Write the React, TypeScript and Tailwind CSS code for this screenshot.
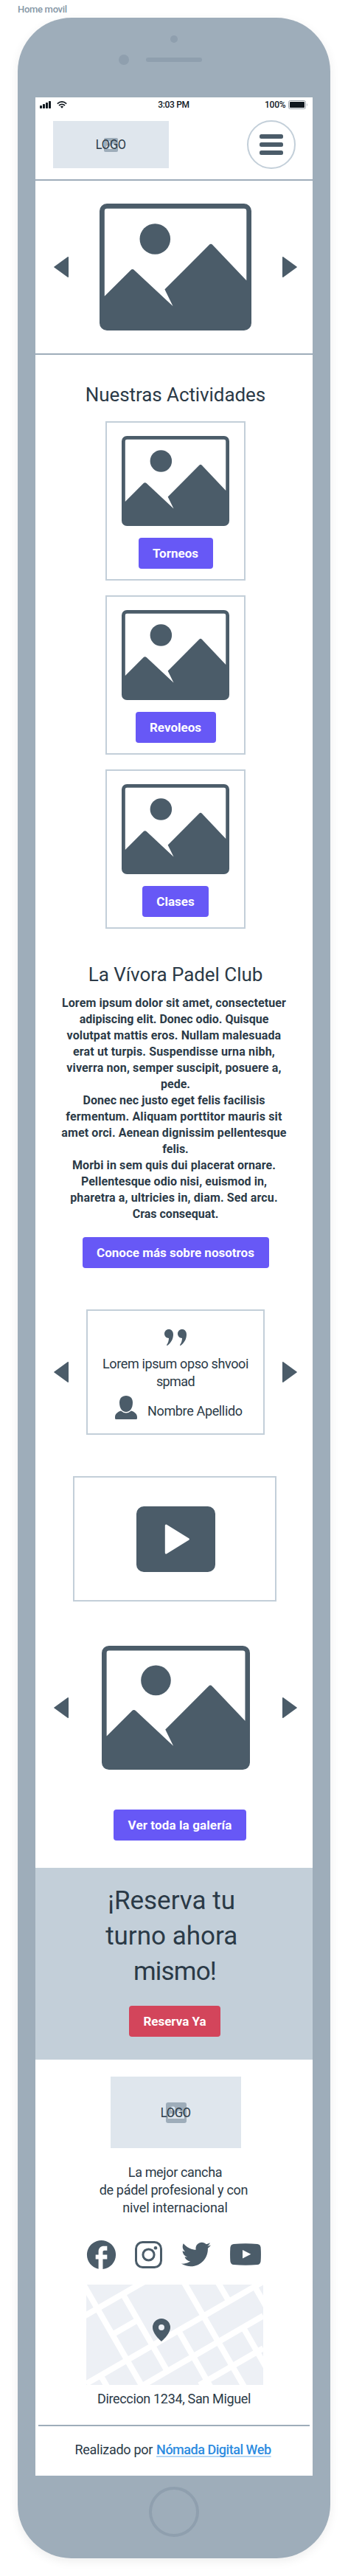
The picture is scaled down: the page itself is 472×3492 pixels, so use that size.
import type { ReactNode } from "react";
import { FaTwitter } from "react-icons/fa";
import { MdFacebook } from "react-icons/md";

function Picture({ className }: { className: string }) {
  return (
    <svg viewBox="0 0 206 172" preserveAspectRatio="none" className={className} fill="currentColor">
      <path
        fillRule="evenodd"
        d="M10 0H196a10 10 0 0 1 10 10V162a10 10 0 0 1-10 10H10a10 10 0 0 1-10-10V10A10 10 0 0 1 10 0ZM10 6.7Q6.8 6.7 6.8 10V125.5L42 90.4Q44.6 87.8 47.4 90.4L99.5 139L88.4 116.3L148.4 56.2Q151 53.4 153.6 56.2L199.3 104.3V10Q199.3 6.7 196 6.7Z"
      />
      <circle cx="75.3" cy="48" r="20.8" />
    </svg>
  );
}

function Arrow({ right = false }: { right?: boolean }) {
  return (
    <svg viewBox="0 0 20 28" className={right ? "h-7 w-5 rotate-180" : "h-7 w-5"} fill="currentColor">
      <path d="M.5 13.4 18.7.3Q20-.4 20 1V27Q20 28.4 18.7 27.7L.5 14.6Q-.3 14 .5 13.4Z" />
    </svg>
  );
}

function Carousel({ children, className = "" }: { children: ReactNode; className?: string }) {
  return (
    <div className={`flex w-full items-center justify-between pr-[21px] pl-[25px] text-[#4b5c69] ${className}`}>
      <Arrow />
      {children}
      <Arrow right />
    </div>
  );
}

function Button({ children, className }: { children: ReactNode; className: string }) {
  return (
    <button
      className={`flex h-[42px] items-center justify-center rounded-[4px] text-[17px] leading-[22px] font-bold whitespace-nowrap text-white ${className}`}
    >
      {children}
    </button>
  );
}

function Logo({ className, mark }: { className: string; mark: string }) {
  return (
    <div className={`grid place-items-center bg-[#dfe6ed] ${className}`}>
      <svg viewBox="0 0 28 28" className={`col-start-1 row-start-1 ${mark}`}>
        <rect width="28" height="28" rx="3" fill="#9eadba" />
        <circle cx="9.5" cy="8.5" r="3" fill="#dfe6ed" />
        <path d="M3 22V19L7 14.5 10.5 18 18 10.500 25 18V22Z" fill="#dfe6ed" />
      </svg>
      <span className="col-start-1 row-start-1 scale-x-[0.88] text-[18.5px] leading-6 font-normal tracking-[-0.2px]">LOGO</span>
    </div>
  );
}

function StatusBar() {
  return (
    <div className="grid h-5 grid-cols-3 items-center pr-[7px] pl-1.5 text-[12px] leading-4 font-medium text-[#10181f]">
      <div className="flex items-center gap-2">
        <svg viewBox="0 0 15 10" className="h-2.5 w-[15px]" fill="currentColor">
          <rect x="0" y="6" width="3" height="4" rx=".8" />
          <rect x="4" y="4" width="3" height="6" rx=".8" />
          <rect x="8" y="2" width="3" height="8" rx=".8" />
          <rect x="12" y="0" width="3" height="10" rx=".8" />
        </svg>
        <svg viewBox="0 0 14 10" className="h-2.5 w-3.5" fill="none" stroke="currentColor" strokeWidth="1.7">
          <path d="M.8 3.6Q7-1.7 13.2 3.6M3 6Q7 2.6 11 6" />
          <path d="M7 9.8 4.8 7.6Q7 6 9.2 7.6Z" fill="currentColor" stroke="none" />
        </svg>
      </div>
      <span className="text-center tracking-[-0.3px]">3:03 PM</span>
      <div className="flex items-center justify-end gap-[3.5px]">
        <span className="tracking-[-0.2px]">100%</span>
        <svg viewBox="0 0 26 12" className="h-3 w-[26px]">
          <rect x=".5" y=".5" width="23" height="11" rx="2.2" fill="none" stroke="#9aa3ab" />
          <rect x="2" y="2" width="20" height="8" rx=".8" fill="currentColor" />
          <path d="M25 4Q26.4 6 25 8Z" fill="#9aa3ab" />
        </svg>
      </div>
    </div>
  );
}

function ActivityCard({ children }: { children: ReactNode }) {
  return (
    <div className="flex h-[216px] w-[190px] flex-col items-center gap-4 border-2 border-[#c3cfd9] pt-[18px]">
      <Picture className="h-[122px] w-[146px] text-[#4b5c69]" />
      {children}
    </div>
  );
}

function CityMap() {
  return (
    <svg viewBox="0 0 720 408" className="h-[136px] w-60">
      <rect width="720" height="408" fill="#edf0f5" />
      <path
        d="M-10 129 215 0 240-14M0 403 720-12M215 419 720 127M460 409 720 259M-11 0 230 418M154 47 324 342M114 199 204 147M397-10 644 418M535-10 576 60M379 194 507 418M644 184 735 342M689 14 735 94M60 372 86 417"
        fill="none"
        stroke="#fff"
        strokeWidth="24"
      />
      <path
        fillRule="evenodd"
        fill="#4b5c69"
        d="M306 138A36 36 0 0 0 270 174C270 201 306 231 306 231S342 201 342 174A36 36 0 0 0 306 138ZM306 162A12 12 0 1 1 306 186A12 12 0 1 1 306 162Z"
      />
    </svg>
  );
}

export default function App() {
  return (
    <div className="h-[3492px] w-[472px] overflow-hidden bg-white px-6 font-['Roboto',sans-serif] text-[#2b3a47]">
      <div className="flex h-6 items-end pb-0.5 text-[13px] leading-[18px] font-medium tracking-[-0.3px] text-[#8798a7]">Home movil</div>
      <div className="flex h-[3444px] w-[424px] flex-col items-center rounded-[73px] bg-[#9eadba] shadow-[0_4px_14px_rgba(0,0,0,0.07)]">
        <div className="flex h-[108px] w-full flex-col items-center pt-6">
          <div className="size-2.5 rounded-full bg-[#8f9fae]" />
          <div className="mt-4 flex w-[150px] items-center gap-[23px]">
            <div className="size-3.5 rounded-full bg-[#8f9fae]" />
            <div className="h-1.5 w-[76px] rounded-full bg-[#8f9fae]" />
          </div>
        </div>

        <main className="flex h-[3224px] w-[376px] flex-col bg-white">
          <StatusBar />
          <header className="flex h-[93px] items-center justify-between border-b-2 border-[#9eadba] pt-[11px] pr-[23px] pb-[14px] pl-6">
            <Logo className="h-16 w-[157px]" mark="size-[19px]" />
            <button className="flex size-[66px] flex-col items-center justify-center gap-[5px] rounded-full border-2 border-[#c3cfd9]">
              <span className="h-1.5 w-8 rounded-[2.5px] bg-[#4b5c69]" />
              <span className="h-1.5 w-8 rounded-[2.5px] bg-[#4b5c69]" />
              <span className="h-1.5 w-8 rounded-[2.5px] bg-[#4b5c69]" />
            </button>
          </header>

          <section className="flex h-[236px] border-b-2 border-[#9eadba]">
            <Carousel>
              <Picture className="h-[172px] w-[206px]" />
            </Carousel>
          </section>

          <section className="flex flex-col items-center pt-[38px] pl-1">
            <h2 className="text-[26px] leading-8 font-normal tracking-[-0.08px]">Nuestras Actividades</h2>
            <div className="mt-5 flex flex-col gap-5">
              <ActivityCard>
                <Button className="w-[101px] bg-[#6758f6]">Torneos</Button>
              </ActivityCard>
              <ActivityCard>
                <Button className="w-[109px] bg-[#6758f6]">Revoleos</Button>
              </ActivityCard>
              <ActivityCard>
                <Button className="w-[90px] bg-[#6758f6]">Clases</Button>
              </ActivityCard>
            </div>
          </section>

          <section className="mt-[46px] flex flex-col items-center pl-1">
            <h2 className="text-[26px] leading-8 font-normal tracking-[-0.05px]">La Vívora Padel Club</h2>
            <div className="mt-3 flex flex-col items-center text-[16px] leading-[22px] font-bold whitespace-pre">
              <p className="tracking-[0.1px]">{"Lorem ipsum dolor sit amet, consectetuer "}</p>
              <p className="tracking-[-0.02px]">{"adipiscing elit. Donec odio. Quisque "}</p>
              <p className="tracking-[0.12px]">{"volutpat mattis eros. Nullam malesuada "}</p>
              <p className="tracking-[0.15px]">{"erat ut turpis. Suspendisse urna nibh, "}</p>
              <p className="tracking-[0.15px]">{"viverra non, semper suscipit, posuere a, "}</p>
              <p>pede.</p>
              <p className="tracking-[0.04px]">{"Donec nec justo eget felis facilisis "}</p>
              <p className="tracking-[0.16px]">{"fermentum. Aliquam porttitor mauris sit "}</p>
              <p className="tracking-[0.09px]">{"amet orci. Aenean dignissim pellentesque "}</p>
              <p>felis.</p>
              <p className="tracking-[0.1px]">{"Morbi in sem quis dui placerat ornare. "}</p>
              <p className="tracking-[0.07px]">{"Pellentesque odio nisi, euismod in, "}</p>
              <p className="tracking-[0.13px]">{"pharetra a, ultricies in, diam. Sed arcu. "}</p>
              <p>Cras consequat.</p>
            </div>
            <Button className="mt-5 w-[253px] bg-[#6758f6]">Conoce más sobre nosotros</Button>
          </section>

          <Carousel className="mt-14">
            <article className="flex h-[170px] w-[242px] flex-col items-center border-2 border-[#c3cfd9] pt-[25px] text-[#2b3a47]">
              <svg viewBox="0 0 30 22" className="h-[22px] w-[30px] text-[#4b5c69]" fill="currentColor">
                <path d="M6 0C2.5 0 0 2.7 0 6C0 9.3 2.6 11.8 6 12C6 15 5 18.5 3.2 21C2.6 21.9 3.5 22.3 4.3 21.7C8.7 18.5 12 13.5 12 7C12 2.7 9.5 0 6 0Z" />
                <path d="M24 0C20.5 0 18 2.7 18 6C18 9.3 20.6 11.8 24 12C24 15 23 18.5 21.2 21C20.6 21.9 21.5 22.3 22.3 21.7C26.7 18.5 30 13.5 30 7C30 2.7 27.5 0 24 0Z" />
              </svg>
              <p className="mt-[13px] flex flex-col items-center text-[18px] leading-6">
                <span className="tracking-[-0.38px]">Lorem ipsum opso shvooi</span>
                <span className="tracking-[-0.6px]">spmad</span>
              </p>
              <div className="mt-[7px] flex w-full items-start gap-3.5 pl-[37px]">
                <svg viewBox="0 0 30 32" className="h-8 w-[30px] text-[#4b5c69]" fill="currentColor">
                  <path d="M15 0C20.5 0 24 3.5 24 9.5C24 16.5 20.5 22 15 22C9.5 22 6 16.5 6 9.5C6 3.5 9.5 0 15 0Z" />
                  <path d="M8 20.5Q15 26.5 22 20.5C26.5 22 30 24.5 30 29V30.5Q30 32 28.5 32H1.5Q0 32 0 30.5V29C0 24.5 3.5 22 8 20.5Z" />
                </svg>
                <span className="mt-[9px] text-[18px] leading-6 tracking-[-0.35px]">Nombre Apellido</span>
              </div>
            </article>
          </Carousel>

          <section className="mt-14 ml-[51px] grid h-[170px] w-[276px] place-items-center border-2 border-[#c3cfd9] pl-0.5">
            <svg viewBox="0 0 107 89" className="h-[89px] w-[107px]">
              <rect width="107" height="89" rx="10" fill="#4b5c69" />
              <path d="M40.3 26V63L70.3 44.5Z" fill="#fff" stroke="#fff" strokeWidth="3" strokeLinejoin="round" />
            </svg>
          </section>

          <section className="mt-[60px] flex flex-col items-center">
            <Carousel>
              <Picture className="h-[168px] w-[201px]" />
            </Carousel>
            <Button className="mt-[54px] ml-4 w-[180px] bg-[#6758f6] tracking-[0.12px]">Ver toda la galería</Button>
          </section>

          <section className="mt-[37px] flex h-[260px] flex-col items-center bg-[#c3cfd9] pt-[21px] pl-0.5">
            <h2 className="flex flex-col items-center text-[35px] leading-[48px] font-normal whitespace-pre">
              <span>{"¡Reserva tu "}</span>
              <span>{"turno ahora "}</span>
              <span className="tracking-[-0.8px]">mismo!</span>
            </h2>
            <Button className="mt-[22px] w-[124px] bg-[#d3455b]">Reserva Ya</Button>
          </section>

          <footer className="flex flex-col items-center pt-[23px]">
            <Logo className="ml-[5px] h-[97px] w-[177px]" mark="size-7" />
            <p className="mt-[21px] flex flex-col items-center pl-[3px] text-[18px] leading-6 whitespace-pre">
              <span className="tracking-[-0.36px]">La mejor cancha</span>
              <span className="tracking-[-0.31px]">{"de pádel profesional y con "}</span>
              <span className="tracking-[-0.14px]">nivel internacional</span>
            </p>
            <div className="mt-[31px] flex h-10 w-[236px] items-center justify-between text-[#4b5c69]">
              <MdFacebook className="-m-1 size-[47px]" />
              <svg viewBox="0 0 37 37" className="size-[37px]" fill="none" stroke="currentColor" strokeWidth="3">
                <rect x="1.5" y="1.5" width="34" height="34" rx="9" />
                <circle cx="18.5" cy="18.5" r="7.6" />
                <circle cx="28" cy="9.2" r="2.3" fill="currentColor" stroke="none" />
              </svg>
              <FaTwitter className="size-10" />
              <svg viewBox="0 0 42 30" className="h-[30px] w-[42px]" fill="currentColor">
                <path
                  fillRule="evenodd"
                  d="M5 .9Q21-.4 37 .9Q41 1.3 41.6 5.5Q42.3 15 41.6 24.5Q41 28.7 37 29.1Q21 30.4 5 29.1Q1 28.7 .4 24.5Q-.3 15 .4 5.5Q1 1.3 5 .9ZM17 9V20.6L28.3 14.8Z"
                />
              </svg>
            </div>
            <div className="mt-[21px] pl-0.5">
              <CityMap />
            </div>
            <p className="mt-[7px] text-[18px] leading-6 tracking-[-0.34px]">Direccion 1234, San Miguel</p>
            <div className="mt-[23px] h-0.5 w-[368px] bg-[#9eadba]" />
            <p className="mt-5 flex gap-[5px] pr-[3px] text-[18px] leading-6">
              <span className="tracking-[-0.28px]">Realizado por</span>
              <a className="font-medium tracking-[-0.47px] text-[#2e8ce0] underline decoration-[#b3d6f5] decoration-2 underline-offset-2 [text-decoration-skip-ink:none]">
                Nómada Digital Web
              </a>
            </p>
          </footer>
        </main>

        <div className="mt-[15px] size-[68px] rounded-full border-4 border-[#8f9fae]" />
      </div>
    </div>
  );
}
